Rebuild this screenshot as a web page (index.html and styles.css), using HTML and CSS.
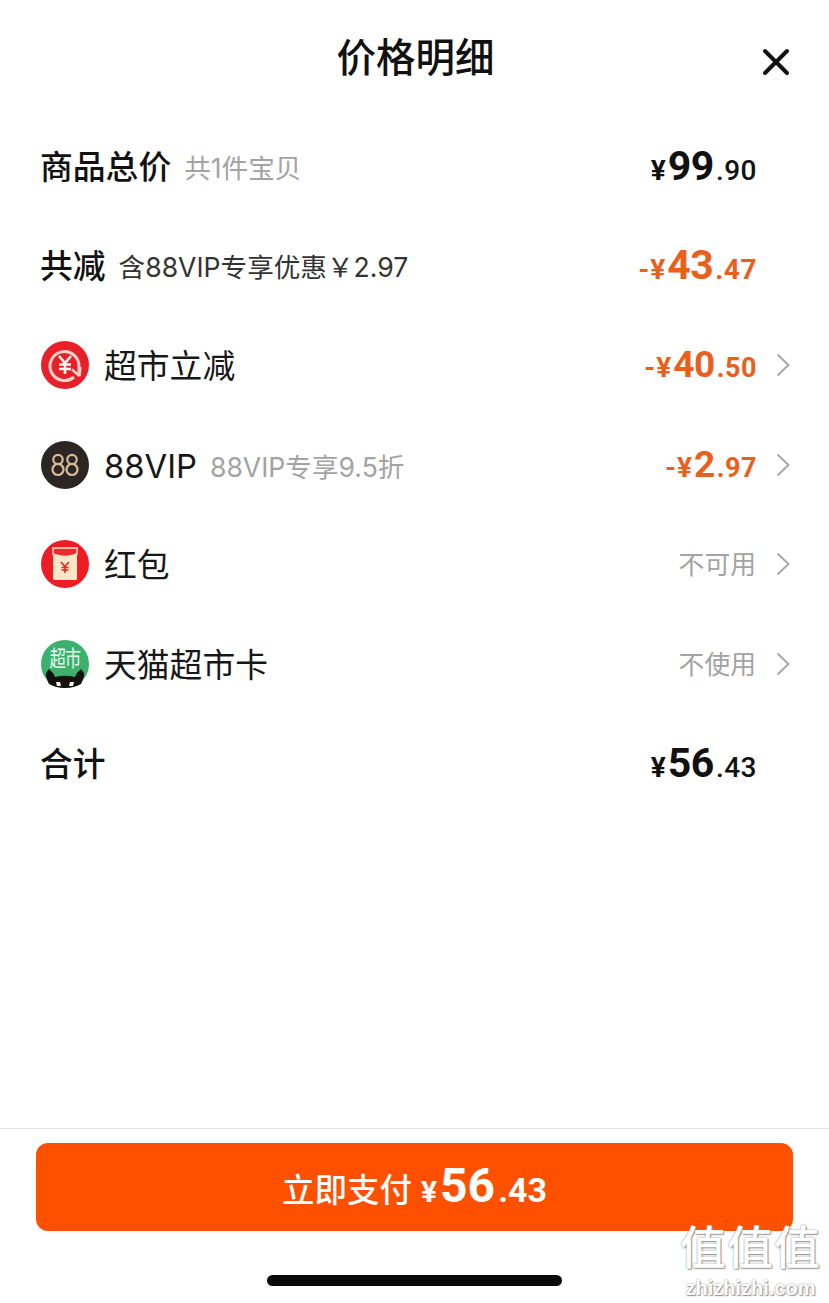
FILE: index.html
```html
<!DOCTYPE html>
<html lang="zh-CN">
<head>
<meta charset="utf-8">
<title>价格明细</title>
<link rel="stylesheet" href="styles.css">
</head>
<body>
<div class="sheet">
  <header class="header">
    <h1 class="title">价格明细</h1>
    <svg class="close" width="28" height="28" viewBox="0 0 28 28"><path d="M3 3 25 25M25 3 3 25" stroke="#111" stroke-width="4" stroke-linecap="round" fill="none"/></svg>
  </header>
  <main class="list">
    <div class="row">
      <span class="label bold">商品总价</span><span class="note">共1件宝贝</span>
      <span class="price"><i class="cur">¥</i><b class="int">99</b><i class="dec">.90</i></span><span class="slot"></span>
    </div>
    <div class="row">
      <span class="label bold">共减</span><span class="note dark">含88VIP专享优惠￥2.97</span>
      <span class="price orange"><i class="cur">-¥</i><b class="int">43</b><i class="dec">.47</i></span><span class="slot"></span>
    </div>
    <div class="row">
      <svg class="icon" viewBox="0 0 48 48">
        <circle cx="24" cy="24" r="24" fill="#e8202a"/>
        <path d="M33 36A14.5 14.5 0 1 1 38 25.5V33" fill="none" stroke="#f8d3c8" stroke-width="3"/>
        <path d="M38.5 35 31 28.5M38.5 35 39.5 26" fill="none" stroke="#f8d3c8" stroke-width="2.4"/>
        <path d="M18 15 24 22 30 15M24 22V33M18 23.5H30M18 28H30" fill="none" stroke="#fff3ee" stroke-width="2.6"/>
      </svg>
      <span class="label">超市立减</span>
      <span class="price orange small"><i class="cur">-¥</i><b class="int">40</b><i class="dec">.50</i></span>
      <span class="slot"><svg class="chev" viewBox="0 0 14 24"><path d="M1.5 1.5 12.5 12 1.5 22.5" fill="none" stroke="#a8a8a8" stroke-width="2"/></svg></span>
    </div>
    <div class="row">
      <svg class="icon" viewBox="0 0 48 48">
        <circle cx="24" cy="24" r="24" fill="#2b2523"/>
        <g fill="none" stroke="#d9bd98" stroke-width="2.2">
          <circle cx="17" cy="18.5" r="4.7"/><circle cx="17" cy="28.5" r="5.5"/>
          <circle cx="31" cy="18.5" r="4.7"/><circle cx="31" cy="28.5" r="5.5"/>
        </g>
      </svg>
      <span class="label">88VIP</span><span class="note">88VIP专享9.5折</span>
      <span class="price orange small"><i class="cur">-¥</i><b class="int">2</b><i class="dec">.97</i></span>
      <span class="slot"><svg class="chev" viewBox="0 0 14 24"><path d="M1.5 1.5 12.5 12 1.5 22.5" fill="none" stroke="#a8a8a8" stroke-width="2"/></svg></span>
    </div>
    <div class="row">
      <svg class="icon" viewBox="0 0 48 48">
        <circle cx="24" cy="24" r="24" fill="#ee1c25"/>
        <rect x="12" y="8" width="24" height="32" rx="1.5" fill="#fbe6c8"/>
        <path d="M12 8H36V14Q24 19 12 14Z" fill="#ee2a2a" stroke="#fbe6c8" stroke-width="1.4"/>
        <path d="M20 22 24 26.5 28 22M24 26.5V33M20.5 27.5H27.5M20.5 30H27.5" fill="none" stroke="#d92d20" stroke-width="1.6"/>
      </svg>
      <span class="label">红包</span>
      <span class="muted">不可用</span>
      <span class="slot"><svg class="chev" viewBox="0 0 14 24"><path d="M1.5 1.5 12.5 12 1.5 22.5" fill="none" stroke="#a8a8a8" stroke-width="2"/></svg></span>
    </div>
    <div class="row">
      <span class="icon-wrap">
        <svg class="icon" viewBox="0 0 48 48">
          <circle cx="24" cy="24" r="24" fill="#3bb16d"/>
          <path d="M8 44Q4 36 5 33L8 29 12 33 14 37Q24 34.500 34 37L36 33 40 29 43 33Q44 36 40 44Q33 48 24 48T8 44Z" fill="#15110f"/>
          <path d="M15 42H19L20 46H16ZM29 42H33L32 46H28Z" fill="#f4f4f4"/>
        </svg>
        <span class="icon-text">超市</span>
      </span>
      <span class="label">天猫超市卡</span>
      <span class="muted">不使用</span>
      <span class="slot"><svg class="chev" viewBox="0 0 14 24"><path d="M1.5 1.5 12.5 12 1.5 22.5" fill="none" stroke="#a8a8a8" stroke-width="2"/></svg></span>
    </div>
    <div class="row">
      <span class="label bold">合计</span>
      <span class="price"><i class="cur">¥</i><b class="int">56</b><i class="dec">.43</i></span><span class="slot"></span>
    </div>
  </main>
  <footer class="footer">
    <div class="pay">
      <span class="pay-label">立即支付</span><i class="pay-cur">¥</i><b class="pay-int">56</b><i class="pay-dec">.43</i>
    </div>
    <div class="home"></div>
  </footer>
  <div class="mark"><div class="mark-cn">值值值</div><div class="mark-en">zhizhizhi.com</div></div>
</div>
</body>
</html>
```

FILE: styles.css
```css
* { box-sizing: border-box; }
html, body { margin: 0; padding: 0; background: #fff; }
body { font-family: Inter, "Noto Sans CJK SC", "Noto Sans", sans-serif; color: #111; }
i { font-style: normal; }
.sheet { position: relative; width: 829px; height: 1303px; display: flex; flex-direction: column; overflow: hidden; }
.header { position: relative; height: 116px; padding: 28px 0 0 2px; text-align: center; flex: none; }
.title { margin: 0; font-size: 39.5px; line-height: 54px; font-weight: 500; font-family: "Noto Sans CJK SC", sans-serif; }
.close { position: absolute; left: 762px; top: 48px; }
.list { flex: 1; display: flex; flex-direction: column; }
.row { height: 99.6px; display: flex; align-items: center; padding: 0 39px 0 41px; flex: none; }
.icon { width: 48px; height: 48px; display: block; flex: none; }
.row > .icon { margin-right: 15px; }
.icon-wrap { position: relative; width: 48px; height: 48px; margin-right: 15px; flex: none; }
.icon-text { position: absolute; left: 0; right: 0; top: 4px; text-align: center; font-size: 19px; line-height: 26px; color: #f0faf3; letter-spacing: -1px; font-family: "Noto Sans CJK SC", sans-serif; transform: scale(.85, 1.15); }
.label { font-size: 32.8px; line-height: 44px; color: #171717; padding-top: 2px; }
.label.bold { font-weight: 500; color: #111; font-family: "Noto Sans CJK SC", sans-serif; padding-top: 0; padding-bottom: 2px; margin-left: -1px; }
.note { margin-left: 13px; font-size: 26.6px; line-height: 36px; color: #a3a3a3; padding-top: 4px; }
.note.dark { color: #333; }
.price { margin-left: auto; font-family: Roboto, "Liberation Sans", sans-serif; color: #111; white-space: nowrap; display: flex; align-items: baseline; font-weight: 500; }
.price .cur { font-size: 28px; font-weight: 700; letter-spacing: 1px; }
.price .int { font-size: 41px; font-weight: 700; letter-spacing: -.5px; margin-left: 1px; }
.price .dec { font-size: 28px; margin-left: 2px; font-weight: 500; letter-spacing: .5px; }
.price.orange { color: #e8601c; }
.price.orange .dec { font-weight: 700; }
.price.small .int { font-size: 37px; }
.price.small .dec { font-size: 27px; }
.muted { margin-left: auto; margin-right: 1px; font-size: 25.8px; line-height: 36px; color: #a3a3a3; padding-bottom: 2px; font-family: "Noto Sans CJK SC", sans-serif; }
.slot { width: 33px; height: 24px; flex: none; display: flex; justify-content: flex-end; }
.chev { width: 14px; height: 24px; display: block; }
.footer { height: 175px; flex: none; border-top: 1px solid #e6e6e6; padding: 14px 36px 0; }
.pay { height: 88px; background: #ff5000; border-radius: 12px; color: #fff; display: flex; justify-content: center; align-items: baseline; padding-top: 14px; font-family: Roboto, "Liberation Sans", sans-serif; font-weight: 500; }
.pay-label { font-family: "Noto Sans CJK SC", sans-serif; font-size: 32.5px; font-weight: 500; }
.pay-cur { font-size: 30px; margin-left: 9px; font-weight: 700; }
.pay-int { font-size: 48px; font-weight: 700; margin-left: 3px; }
.pay-dec { font-size: 34px; margin-left: 3px; font-weight: 700; }
.home { width: 295px; height: 11px; border-radius: 6px; background: #0a0a0a; margin: 44px auto 0; }
.mark { position: absolute; left: 678px; top: 1218px; width: 145px; text-align: center; color: #fff; text-shadow: 0 0 2px #888, 1px 1px 1px #999; font-family: "Noto Sans CJK SC", sans-serif; }
.mark-cn { font-size: 46px; line-height: 52px; letter-spacing: 1px; white-space: nowrap; font-weight: 500; }
.mark-en { margin-top: 7px; font-size: 20px; line-height: 23px; white-space: nowrap; font-family: "Liberation Sans", sans-serif; font-weight: 700; }
```
